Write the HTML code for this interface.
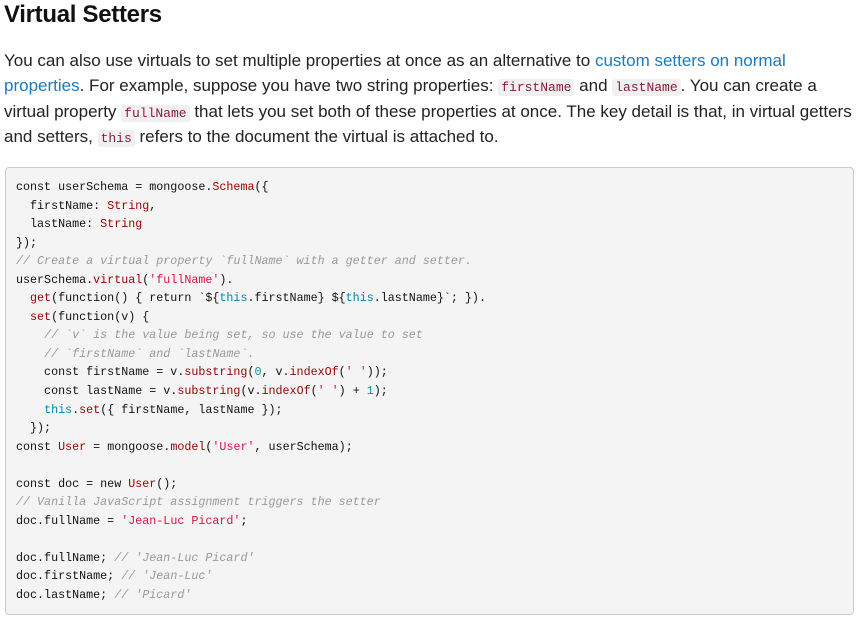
<!DOCTYPE html>
<html><head><style>
body{margin:0;background:#fff;width:859px;height:623px;overflow:hidden;font-family:"Liberation Sans",sans-serif;color:#222}
h2{position:absolute;left:4px;top:0;margin:0;font-size:24px;font-weight:bold;line-height:30px;color:#111;letter-spacing:-0.3px}
p{position:absolute;left:4px;top:48px;width:856px;margin:0;font-size:17px;line-height:25.3px;color:#222;white-space:nowrap}
a{color:#1a7ac0;text-decoration:none}
code.i{font-family:"Liberation Mono",monospace;font-size:13px;line-height:1;color:#8b1a3a;background:#f0f0f0;border-radius:3px;padding:1px 3px}
pre{position:absolute;left:5px;top:167px;width:837px;height:436px;margin:0;padding:10px 0 0 10px;background:#f4f4f4;border:1px solid #ccc;border-radius:4px;font-family:"Liberation Mono",monospace;font-size:11.7px;line-height:18.55px;color:#111}
.f{color:#990000}.s{color:#dd1144}.c{color:#999;font-style:italic}.t{color:#0086b3}.n{color:#009999}
</style></head><body>
<h2>Virtual Setters</h2>
<p>You can also use virtuals to set multiple properties at once as an alternative to <a>custom setters on normal</a><br><a>properties</a>. For example, suppose you have two string properties: <code class="i">firstName</code> and <code class="i">lastName</code>. You can create a<br>virtual property <code class="i">fullName</code> that lets you set both of these properties at once. The key detail is that, in virtual getters<br>and setters, <code class="i">this</code> refers to the document the virtual is attached to.</p>
<pre>const userSchema = mongoose.<span class="f">Schema</span>({
  firstName: <span class="f">String</span>,
  lastName: <span class="f">String</span>
});
<span class="c">// Create a virtual property `fullName` with a getter and setter.</span>
userSchema.<span class="f">virtual</span>(<span class="s">'fullName'</span>).
  <span class="f">get</span>(function() { return `${<span class="t">this</span>.firstName} ${<span class="t">this</span>.lastName}`; }).
  <span class="f">set</span>(function(v) {
    <span class="c">// `v` is the value being set, so use the value to set</span>
    <span class="c">// `firstName` and `lastName`.</span>
    const firstName = v.<span class="f">substring</span>(<span class="n">0</span>, v.<span class="f">indexOf</span>(<span class="s">' '</span>));
    const lastName = v.<span class="f">substring</span>(v.<span class="f">indexOf</span>(<span class="s">' '</span>) + <span class="n">1</span>);
    <span class="t">this</span>.<span class="f">set</span>({ firstName, lastName });
  });
const <span class="f">User</span> = mongoose.<span class="f">model</span>(<span class="s">'User'</span>, userSchema);

const doc = new <span class="f">User</span>();
<span class="c">// Vanilla JavaScript assignment triggers the setter</span>
doc.fullName = <span class="s">'Jean-Luc Picard'</span>;

doc.fullName; <span class="c">// 'Jean-Luc Picard'</span>
doc.firstName; <span class="c">// 'Jean-Luc'</span>
doc.lastName; <span class="c">// 'Picard'</span></pre>
</body></html>
